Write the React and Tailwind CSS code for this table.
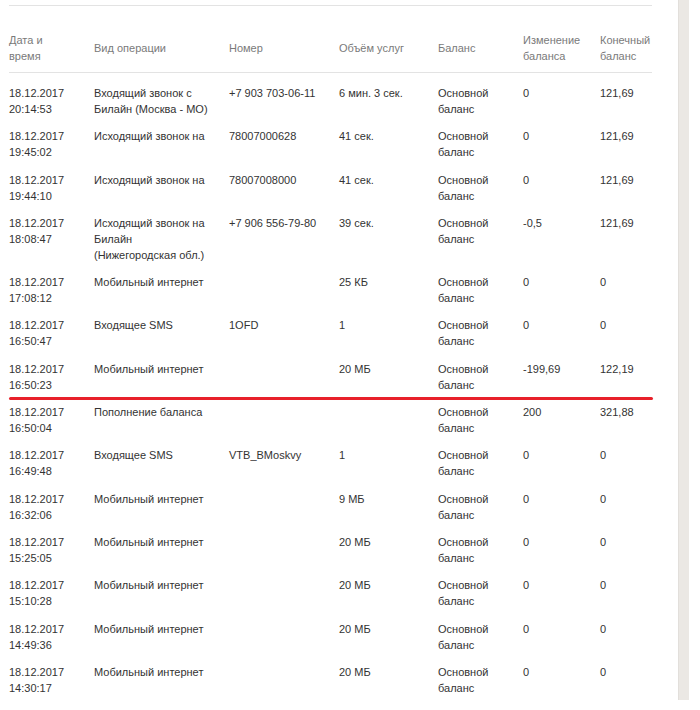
import React from 'react';

const cols = 'grid grid-cols-[85px_135px_110px_99px_85px_77px_52px]';

const headers = [
  ['Дата и', 'время'],
  ['Вид операции'],
  ['Номер'],
  ['Объём услуг'],
  ['Баланс'],
  ['Изменение', 'баланса'],
  ['Конечный', 'баланс']
];

const rows = [
  { time: '20:14:53', op: ['Входящий звонок с', 'Билайн (Москва - МО)'], num: '+7 903 703-06-11', vol: '6 мин. 3 сек.', diff: '0', total: '121,69' },
  { time: '19:45:02', op: ['Исходящий звонок на'], num: '78007000628', vol: '41 сек.', diff: '0', total: '121,69' },
  { time: '19:44:10', op: ['Исходящий звонок на'], num: '78007008000', vol: '41 сек.', diff: '0', total: '121,69' },
  { time: '18:08:47', op: ['Исходящий звонок на', 'Билайн', '(Нижегородская обл.)'], num: '+7 906 556-79-80', vol: '39 сек.', diff: '-0,5', total: '121,69' },
  { time: '17:08:12', op: ['Мобильный интернет'], num: '', vol: '25 КБ', diff: '0', total: '0' },
  { time: '16:50:47', op: ['Входящее SMS'], num: '1OFD', vol: '1', diff: '0', total: '0' },
  { time: '16:50:23', op: ['Мобильный интернет'], num: '', vol: '20 МБ', diff: '-199,69', total: '122,19', marked: true },
  { time: '16:50:04', op: ['Пополнение баланса'], num: '', vol: '', diff: '200', total: '321,88' },
  { time: '16:49:48', op: ['Входящее SMS'], num: 'VTB_BMoskvy', vol: '1', diff: '0', total: '0' },
  { time: '16:32:06', op: ['Мобильный интернет'], num: '', vol: '9 МБ', diff: '0', total: '0' },
  { time: '15:25:05', op: ['Мобильный интернет'], num: '', vol: '20 МБ', diff: '0', total: '0' },
  { time: '15:10:28', op: ['Мобильный интернет'], num: '', vol: '20 МБ', diff: '0', total: '0' },
  { time: '14:49:36', op: ['Мобильный интернет'], num: '', vol: '20 МБ', diff: '0', total: '0' },
  { time: '14:30:17', op: ['Мобильный интернет'], num: '', vol: '20 МБ', diff: '0', total: '0' }
];

const Lines = ({ lines }) => (
  <div>
    {lines.map((l, i) => (
      <div key={i} className="whitespace-nowrap">{l}</div>
    ))}
  </div>
);

export default function App() {
  return (
    <div className="flex bg-white font-['Liberation_Sans',Arial,sans-serif] text-[11px] leading-[16px] text-[#333]">
      <div className="w-[678px] pl-[9px] pt-[5px]">
        <div className="w-[643px] border-t border-[#e3e3e3]">
          {/* Header */}
          <div className={`${cols} items-center pt-[26px] pb-[8px] border-b border-[#e3e3e3] text-[#7a7a7a]`}>
            {headers.map((h, i) => (
              <Lines key={i} lines={h} />
            ))}
          </div>

          {/* Body */}
          <div className="pt-[6px]">
            {rows.map((r, i) => (
              <div key={i} className={`${cols} relative pt-[6px] pb-[5.3px]`}>
                <Lines lines={['18.12.2017', r.time]} />
                <Lines lines={r.op} />
                <div className="whitespace-nowrap">{r.num}</div>
                <div className="whitespace-nowrap">{r.vol}</div>
                <Lines lines={['Основной', 'баланс']} />
                <div>{r.diff}</div>
                <div>{r.total}</div>
                {r.marked && (
                  <span className="absolute left-0 -right-[1px] -bottom-[1.5px] h-[3px] rounded-full bg-[#e8202a]" />
                )}
              </div>
            ))}
          </div>
        </div>
      </div>
      <div className="w-[11px] h-[700px] bg-[#ebe8e4] border-l border-[#e2dfdb]" />
    </div>
  );
}
